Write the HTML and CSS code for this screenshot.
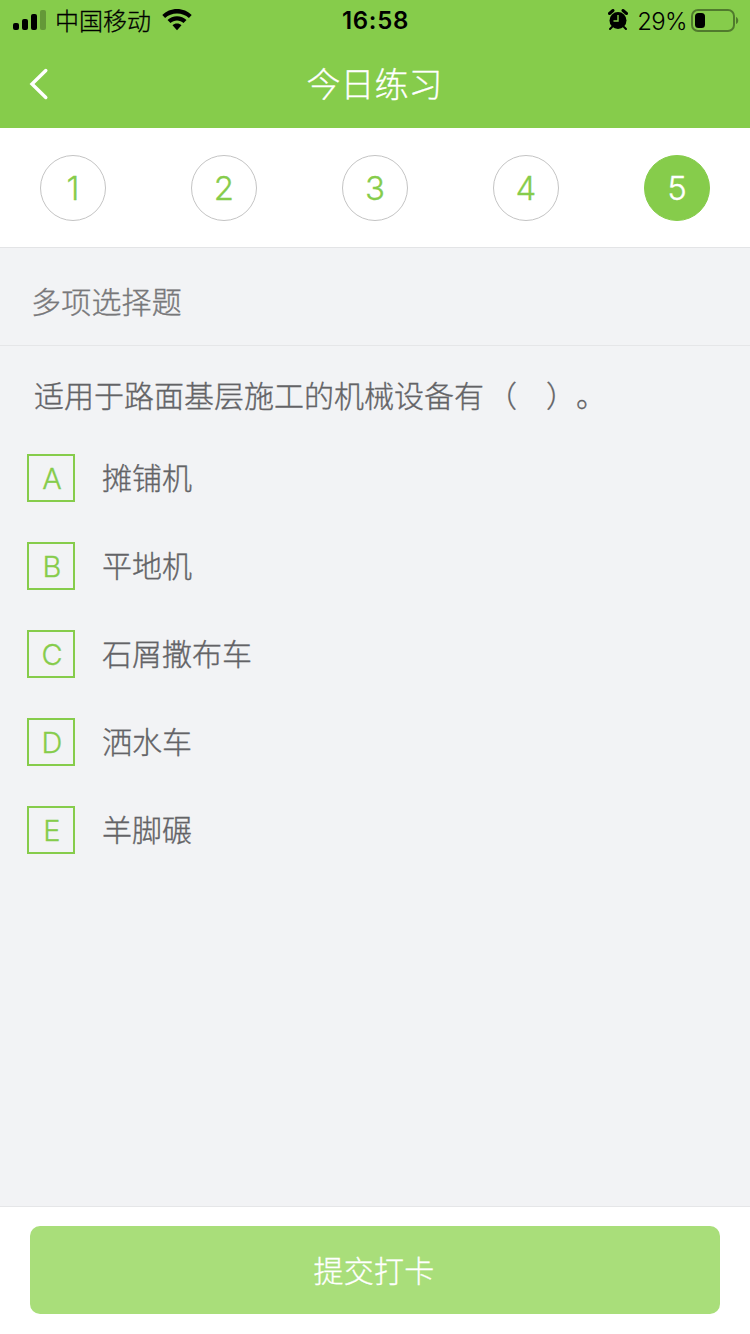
FILE: index.html
```html
<!DOCTYPE html>
<html lang="zh-CN">
<head>
<meta charset="utf-8">
<title>今日练习</title>
<link rel="stylesheet" href="styles.css">
</head>
<body>
<div class="screen">
  <header class="top">
    <div class="status">
      <div class="status-left">
        <svg class="signal" width="34" height="22" viewBox="0 0 34 22"><rect x="1" y="14" width="6" height="7" rx="2"/><rect x="10" y="10" width="6" height="11" rx="2"/><rect x="19" y="5" width="6" height="16" rx="2"/><rect x="28" y="1" width="6" height="20" rx="2" opacity=".25"/></svg>
        <span class="carrier">中国移动</span>
        <svg class="wifi" width="30" height="22" viewBox="0 0 30 22"><path d="M15 0C9.300 0 4 2.300 .3 6l2.800 3C6.300 6 10.400 4.400 15 4.400s8.700 1.600 11.900 4.600l2.800-3C26 2.300 20.700 0 15 0ZM15 7.200c-3.700 0-7 1.400-9.500 3.900l3 3c1.800-1.600 4-2.500 6.500-2.500s4.700.9 6.500 2.500l3-3C22 8.600 18.700 7.200 15 7.200ZM15 14.400c-1.800 0-3.300.6-4.500 1.800L15 21.200l4.500-5C18.300 15 16.800 14.400 15 14.400Z"/></svg>
      </div>
      <span class="clock">16:58</span>
      <div class="status-right">
        <svg class="alarm" width="20" height="22" viewBox="0 0 20 22"><circle cx="10" cy="11.500" r="8.500"/><path d="M1.500 4.500 5 1.500M18.500 4.500 15 1.500" stroke="#000" stroke-width="3" stroke-linecap="round"/><path d="m4 18-2 2M16 18l2 2" stroke="#000" stroke-width="2" stroke-linecap="round"/><path d="M10 6v6H5.500" fill="none" stroke="#86cc4b" stroke-width="1.400"/></svg>
        <span class="percent">29%</span>
        <svg class="battery" width="48" height="24" viewBox="0 0 48 24"><rect x="1" y="2" width="42" height="21" rx="6" fill="none" stroke="#000" stroke-opacity=".4" stroke-width="2"/><rect x="4" y="5" width="10" height="15" rx="3.500"/><path d="M45 9c3 1 3 6 0 7Z" opacity=".4"/></svg>
      </div>
    </div>
    <nav class="nav">
      <svg class="back" width="20" height="32" viewBox="0 0 20 32"><path d="M16.800 2.500 3 16l13.800 13.500" fill="none" stroke="#fff" stroke-width="3.400" stroke-linecap="round"/></svg>
      <h1 class="title">今日练习</h1>
    </nav>
  </header>
  <div class="steps">
    <span class="step">1</span><span class="step">2</span><span class="step">3</span><span class="step">4</span><span class="step step-active">5</span>
  </div>
  <div class="kind">多项选择题</div>
  <main class="question">
    <p class="stem">适用于路面基层施工的机械设备有<span class="brackets">（<span class="blank"></span>）。</span></p>
    <div class="option"><span class="letter">A</span><span>摊铺机</span></div>
    <div class="option"><span class="letter">B</span><span>平地机</span></div>
    <div class="option"><span class="letter">C</span><span>石屑撒布车</span></div>
    <div class="option"><span class="letter">D</span><span>洒水车</span></div>
    <div class="option"><span class="letter">E</span><span>羊脚碾</span></div>
  </main>
  <footer class="footer"><button class="submit">提交打卡</button></footer>
</div>
</body>
</html>
```
FILE: styles.css
```css
* { box-sizing: border-box; }
body { margin: 0; font-family: Inter, "Noto Sans CJK SC", sans-serif; color: #636366; text-spacing-trim: space-all; }
.screen { width: 750px; height: 1334px; display: flex; flex-direction: column; background: #f2f3f5; }
.top { height: 128px; background: #86cc4b; }
.status { height: 40px; display: grid; grid-template-columns: 1fr auto 1fr; align-items: center; padding: 0 11px 0 12px; color: #000; font-size: 24px; line-height: 34px; }
.status-left, .status-right { display: flex; align-items: center; height: 38px; }
.status-right { justify-content: flex-end; }
.carrier { margin: 0 11px 0 9px; padding-top: 3px; font-weight: 300; -webkit-text-stroke: .3px; }
.clock { padding-top: 1px; font-weight: 600; letter-spacing: .7px; }
.percent { margin: 0 4px 0 9px; padding-top: 3px; font-weight: 350; letter-spacing: -.6px; }
.nav { height: 88px; display: grid; grid-template-columns: 60px 1fr 60px; align-items: center; }
.back { margin-left: 29px; }
.title { margin: 0; padding-top: 2px; text-align: center; color: #fff; font-size: 34px; font-weight: 300; line-height: 86px; -webkit-text-stroke: .3px; text-indent: -1px; }
.steps { height: 120px; display: flex; justify-content: space-between; align-items: center; padding: 0 40px; background: #fff; border-bottom: 1px solid #e3e4e6; }
.step { width: 66px; height: 66px; border: 1px solid #c4c4c4; border-radius: 50%; color: #86cc4b; font-size: 33px; font-weight: 350; line-height: 64px; text-align: center; -webkit-text-stroke: .3px; }
.step-active { background: #86cc4b; border-color: #86cc4b; color: #fff; }
.kind { height: 98px; padding-left: 31px; border-bottom: 1px solid #e5e6e8; color: #78787a; font-size: 30px; font-weight: 300; line-height: 108px; letter-spacing: .2px; -webkit-text-stroke: .35px; }
.question { flex: 1; padding: 26px 27px 0; font-size: 30px; font-weight: 300; line-height: 48px; -webkit-text-stroke: .35px; }
.stem { margin: 0 0 34px 7px; }
.brackets { margin-left: 3px; }
.blank { display: inline-block; width: 29px; }
.option { display: flex; gap: 27px; height: 48px; margin-bottom: 40px; }
.letter { width: 48px; height: 48px; border: 2px solid #86cc4b; color: #86cc4b; font-size: 29px; font-weight: 300; line-height: 46px; text-align: center; padding-left: 2px; -webkit-text-stroke: .3px; }
.footer { height: 128px; padding: 19px 30px; background: #fff; border-top: 1px solid #e5e6e8; }
.submit { display: block; width: 100%; height: 88px; border: 0; border-radius: 10px; background: #a9de7a; color: #fff; font: 300 30px/86px "Noto Sans CJK SC", sans-serif; letter-spacing: .2px; padding: 0 2px 2px 0; -webkit-text-stroke: .3px; }
```
